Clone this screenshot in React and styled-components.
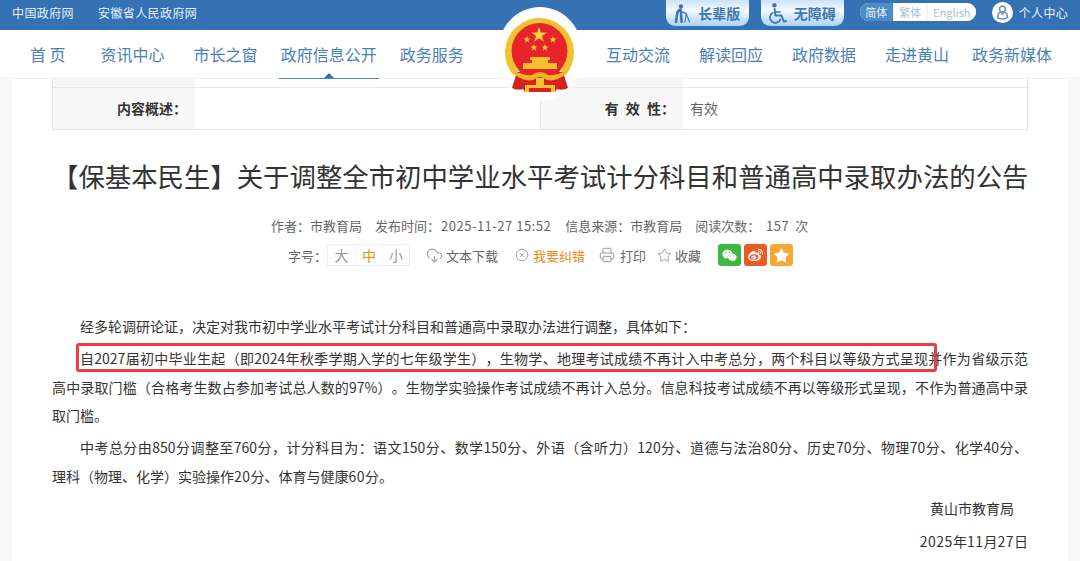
import React from 'react';
import styled, { createGlobalStyle } from 'styled-components';
import { FaWeibo, FaWeixin, FaStar } from 'react-icons/fa';
import { CircleX, CloudDownload, Printer, Star } from 'lucide-react';

const GlobalStyle = createGlobalStyle`
  html, body { margin: 0; padding: 0; background: #fff; overflow: hidden; }
  body {
    font-family: "Noto Sans CJK SC", "Liberation Sans", sans-serif;
    text-spacing-trim: space-all;
  }
  * { box-sizing: border-box; }
`;

const Page = styled.div`
  position: relative;
  width: 1080px;
  height: 561px;
  overflow: hidden;
  background: #f9f9f9;
`;

const TopBar = styled.div`
  height: 30px;
  background: #3572b4;
  display: flex;
  align-items: flex-start;
  padding-left: 12px;
  color: #e4eef8;
  font-size: 12px;
`;

const TopLink = styled.span`
  line-height: 26px;
  letter-spacing: 0.4px;
  margin-right: 24px;
`;

const TopRight = styled.div`
  margin-left: auto;
  display: flex;
  align-items: flex-start;
  padding-right: 12px;
`;

const ModeButton = styled.div`
  width: 83px;
  height: 26px;
  margin-right: 12px;
  display: flex;
  align-items: center;
  justify-content: center;
  gap: 7px;
  border-radius: 0 0 9px 9px;
  background: linear-gradient(#c9e3f9, #f3faff 40%, #a9d3f7);
  color: #3f77b2;
  font-size: 14px;
  font-weight: 700;
  svg { flex: none; }
`;

const LangPill = styled.div`
  display: flex;
  height: 18px;
  margin: 3px 16px 0 4px;
  border-radius: 9px;
  overflow: hidden;
  background: #fff;
  font-size: 11px;
`;

const Lang = styled.span`
  width: ${(p) => p.$w}px;
  line-height: 18px;
  text-align: center;
  color: ${(p) => (p.$on ? '#eaf3fb' : '#a9bfd6')};
  background: ${(p) => (p.$on ? '#4d8cc6' : '#fff')};
  & + & { border-left: 1px solid #e6edf4; }
`;

const UserBadge = styled.div`
  display: flex;
  align-items: center;
  gap: 6px;
  height: 24px;
  font-size: 12px;
  letter-spacing: 0.3px;
  color: #eef4fa;
`;

const NavBar = styled.div`
  height: 49px;
  background: #fff;
  display: flex;
  align-items: flex-start;
  padding: 0 28px 0 30px;
  justify-content: space-between;
  border-bottom: 1px solid #f0f0f0;
`;

const NavGroup = styled.nav`
  display: flex;
`;

const NavLink = styled.a`
  position: relative;
  height: 48px;
  margin-left: ${(p) => p.$gap || 0}px;
  font-size: 16px;
  line-height: 48px;
  color: #4a7fb7;
  white-space: pre;
  ${(p) =>
    p.$active &&
    `
    &::after {
      content: '';
      position: absolute;
      left: -2px;
      right: -2px;
      bottom: -1px;
      border-bottom: 1px solid #4f86bd;
    }
    &::before {
      content: '';
      position: absolute;
      left: 50%;
      bottom: -1px;
      margin-left: -6px;
      border: 6px solid transparent;
      border-top: 0;
      border-bottom-color: #3572b4;
    }
  `}
`;

const EmblemWrap = styled.div`
  position: absolute;
  z-index: 2;
  left: 497px;
  top: 7px;
  width: 86px;
  height: 94px;
  border-radius: 50%;
  background: #fff;
  padding: 11px 0 0 8px;
`;

const Content = styled.main`
  margin: 0 12px;
  height: 482px;
  padding: 0 40px;
  background: #fff;
`;

const InfoTable = styled.div`
  position: relative;
  display: grid;
  grid-template-columns: 143px 345px 143px 345px;
  height: 51px;
  border-bottom: 1px solid #e4e4e4;
  border-right: 1px solid #e4e4e4;
  &::before {
    content: '';
    position: absolute;
    left: 0;
    right: 0;
    top: 8px;
    border-top: 1px solid #e8e8e8;
  }
`;

const InfoLabel = styled.div`
  background: #f7f7f7;
  border-left: 1px solid #e8e8e8;
  padding: 8px 8px 0 0;
  display: flex;
  align-items: center;
  justify-content: flex-end;
  font-size: 14px;
  font-weight: 700;
  color: #333;
  white-space: pre;
  word-spacing: ${(p) => p.$wordGap || 0}px;
`;

const InfoValue = styled.div`
  padding: 8px 0 0 7px;
  display: flex;
  align-items: center;
  font-size: 14px;
  color: #666;
`;

const Title = styled.h1`
  margin: 26px 0 0;
  font-size: 26.4px;
  font-weight: 400;
  line-height: 40px;
  color: #333;
  text-align: center;
  white-space: nowrap;
`;

const Meta = styled.div`
  margin-top: 20px;
  display: flex;
  padding-left: 219px;
  font-size: 13px;
  line-height: 20px;
  color: #666;
  white-space: pre;
`;

const MetaItem = styled.span`
  margin-right: 13px;
`;

const Digits = styled.span`
  letter-spacing: 0.5px;
  margin: 0 ${(p) => p.$side || 0}px;
`;

const Tools = styled.div`
  margin-top: 8px;
  height: 22px;
  padding-left: 236px;
  display: flex;
  align-items: center;
  font-size: 13px;
  color: #666;
`;

const SizeBox = styled.div`
  display: flex;
  margin: 0 16px 0 0;
  height: 22px;
  border: 1px solid #f0f0f0;
  font-size: 14px;
`;

const SizeCell = styled.span`
  width: 27px;
  line-height: 20px;
  text-align: center;
  color: ${(p) => (p.$on ? '#f08a1d' : '#999')};
  & + & { border-left: 1px solid #f5f5f5; }
`;

const Tool = styled.span`
  display: inline-flex;
  align-items: center;
  gap: ${(p) => p.$gap || 4}px;
  margin-right: ${(p) => p.$mr || 0}px;
  color: ${(p) => p.$color || '#666'};
  svg { color: #9a9a9a; flex: none; }
`;

const Share = styled.span`
  width: 23px;
  height: 22px;
  margin-right: 3px;
  border-radius: 3px;
  background: ${(p) => p.$bg};
  color: #fff;
  display: inline-flex;
  align-items: center;
  justify-content: center;
  font-size: 15px;
`;

const Article = styled.article`
  margin-top: 46px;
  font-size: 14px;
  line-height: 28.5px;
  color: #333;
`;

const Para = styled.p`
  position: relative;
  margin: 0 0 3.5px;
`;

const Line = styled.span`
  display: block;
  padding-left: ${(p) => (p.$indent ? 28 : 0)}px;
  text-align: justify;
  text-align-last: ${(p) => (p.$full ? 'justify' : 'left')};
`;

const Mark = styled.span`
  position: absolute;
  left: 24px;
  top: -1px;
  width: 861px;
  height: 29px;
  border: 3px solid #ee3b48;
  border-radius: 3px;
`;

const Sign = styled.p`
  margin: ${(p) => p.$mt || 3.5}px 0 0;
  text-align: right;
  padding-right: ${(p) => p.$pr || 0}px;
`;

const ElderIcon = () => (
  <svg width="17" height="19" viewBox="0 0 17 19" fill="none" stroke="#3f77b2" strokeLinecap="round">
    <circle cx="7" cy="2.4" r="2.2" fill="#3f77b2" stroke="none" />
    <path d="M6.4 5.4 Q3 7 3 10.6 L2 18 M6.4 5.4 Q7.4 9 7 11 L7.6 18" strokeWidth="2.6" />
    <path d="M7 7.6 L12 9.4" strokeWidth="1.4" />
    <path d="M12.2 9.4 L11 18 M12.2 9.4 L15.4 18" strokeWidth="1.1" />
  </svg>
);

const WheelchairIcon = () => (
  <svg width="18" height="21" viewBox="0 0 18 21" fill="none" stroke="#3f77b2" strokeLinecap="round">
    <circle cx="5.4" cy="2.2" r="2.2" fill="#3f77b2" stroke="none" />
    <path d="M5.6 6 L6.4 12.6 L12.4 12.6 L15 18.6 L17 18" strokeWidth="2" />
    <path d="M6 9 L11 9" strokeWidth="1.6" />
    <path d="M3.6 9.8 A5.4 5.4 0 1 0 11.4 16.4" strokeWidth="1.7" />
  </svg>
);

const STAR_SMALL = 'l.9 2.5 2.7 0 -2.2 1.6 .8 2.6 -2.2 -1.6 -2.2 1.6 .8 -2.6 -2.2 -1.6 2.7 0 Z';

const Emblem = () => (
  <svg width="70" height="76" viewBox="0 0 70 76">
    <defs>
      <clipPath id="discCut">
        <rect x="0" y="0" width="70" height="56" />
      </clipPath>
    </defs>
    {/* red drape behind the ribbon */}
    <path d="M12 54 L58 54 L63 70 Q58 73 52 71 L50 74 L20 74 L18 71 Q12 73 7 70 Z" fill="#d8201f" />
    <circle cx="34.5" cy="33" r="28.5" fill="#e8232a" clipPath="url(#discCut)" />
    <path d="M8.3 57 A34.5 34.5 0 1 1 60.7 57 L55.1 52 A28 28 0 1 0 13.9 52 Z" fill="#f3c22e" />
    <path d="M34 9 l1.9 5.6 5.9 0 -4.8 3.5 1.8 5.7 -4.8 -3.5 -4.8 3.5 1.8 -5.7 -4.8 -3.5 5.9 0 Z" fill="#f9d33a" />
    <path d={`M22 18 ${STAR_SMALL}`} fill="#f9d33a" />
    <path d={`M48 18 ${STAR_SMALL}`} fill="#f9d33a" />
    <path d={`M29 26 ${STAR_SMALL}`} fill="#f9d33a" />
    <path d={`M40 26 ${STAR_SMALL}`} fill="#f9d33a" />
    {/* gate */}
    <path d="M25 39 h20 v3 h-2 v3 h9 v6 h-34 v-6 h9 v-3 h-2 Z" fill="#f3c22e" />
    {/* ribbon */}
    <path d="M9 53 Q20 58 27 57 Q31 54 35 54 Q39 54 43 57 Q50 58 61 53 L60 57 Q50 64 42 62 Q38 59 35 59 Q32 59 28 62 Q20 64 10 57 Z" fill="#f0b424" />
    <path d="M20 67 h30 v7 h-4 v-4 h-22 v4 h-4 Z" fill="#f3c22e" />
    <path d="M31 60 h8 v7 h-8 Z" fill="#f3c22e" />
  </svg>
);

const UserIcon = () => (
  <svg width="21" height="21" viewBox="0 0 21 21">
    <circle cx="10.5" cy="10.5" r="10.5" fill="#fff" />
    <circle cx="10.5" cy="7" r="3" fill="none" stroke="#6c96c6" strokeWidth="1.6" />
    <path d="M6 16 q-1 -5 3 -6 l1.5 2.2 1.5 -2.2 q4 1 3 6 q-4.5 2 -9 0 Z" fill="none" stroke="#6c96c6" strokeWidth="1.6" />
  </svg>
);

const LEFT_NAV = [
  ['首 页', 0],
  ['资讯中心', 35],
  ['市长之窗', 29],
  ['政府信息公开', 23, true],
  ['政务服务', 23],
];
const RIGHT_NAV = [
  ['互动交流', 0],
  ['解读回应', 29],
  ['政府数据', 29],
  ['走进黄山', 29],
  ['政务新媒体', 23],
];

const renderNav = (items) =>
  items.map(([label, gap, active]) => (
    <NavLink key={label} $gap={gap} $active={active}>
      {label}
    </NavLink>
  ));

export default function App() {
  return (
    <Page>
      <GlobalStyle />
      <TopBar>
        <TopLink>中国政府网</TopLink>
        <TopLink>安徽省人民政府网</TopLink>
        <TopRight>
          <ModeButton>
            <ElderIcon />
            长辈版
          </ModeButton>
          <ModeButton>
            <WheelchairIcon />
            无障碍
          </ModeButton>
          <LangPill>
            <Lang $w={33} $on>简体</Lang>
            <Lang $w={34}>繁体</Lang>
            <Lang $w={49}>English</Lang>
          </LangPill>
          <UserBadge>
            <UserIcon />
            个人中心
          </UserBadge>
        </TopRight>
      </TopBar>
      <NavBar>
        <NavGroup>{renderNav(LEFT_NAV)}</NavGroup>
        <NavGroup>{renderNav(RIGHT_NAV)}</NavGroup>
      </NavBar>
      <EmblemWrap>
        <Emblem />
      </EmblemWrap>
      <Content>
        <InfoTable>
          <InfoLabel>内容概述：</InfoLabel>
          <InfoValue />
          <InfoLabel $wordGap={4}>有 效 性：</InfoLabel>
          <InfoValue>有效</InfoValue>
        </InfoTable>
        <Title>【保基本民生】关于调整全市初中学业水平考试计分科目和普通高中录取办法的公告</Title>
        <Meta>
          <MetaItem>作者：市教育局</MetaItem>
          <MetaItem>发布时间：<Digits $side={1}>2025-11-27 15:52</Digits></MetaItem>
          <MetaItem>信息来源：市教育局</MetaItem>
          <MetaItem>阅读次数： <Digits $side={3}>157</Digits> 次</MetaItem>
        </Meta>
        <Tools>
          <Tool>字号：</Tool>
          <SizeBox>
            <SizeCell>大</SizeCell>
            <SizeCell $on>中</SizeCell>
            <SizeCell>小</SizeCell>
          </SizeBox>
          <Tool $mr={17} $gap={3}>
            <CloudDownload size={17} strokeWidth={1.5} />
            文本下载
          </Tool>
          <Tool $mr={14} $gap={4} $color="#f08a1d">
            <CircleX size={14} strokeWidth={1.5} />
            我要纠错
          </Tool>
          <Tool $mr={11} $gap={5}>
            <Printer size={16} strokeWidth={1.5} />
            打印
          </Tool>
          <Tool $mr={17} $gap={3}>
            <Star size={15} strokeWidth={1.5} />
            收藏
          </Tool>
          <Share $bg="#3fb83f"><FaWeixin /></Share>
          <Share $bg="#ee5a24"><FaWeibo /></Share>
          <Share $bg="#f7a833"><FaStar /></Share>
        </Tools>
        <Article>
          <Para>
            <Line $indent>经多轮调研论证，决定对我市初中学业水平考试计分科目和普通高中录取办法进行调整，具体如下：</Line>
          </Para>
          <Para>
            <Mark />
            <Line $indent $full>自2027届初中毕业生起（即2024年秋季学期入学的七年级学生），生物学、地理考试成绩不再计入中考总分，两个科目以等级方式呈现并作为省级示范</Line>
            <Line $full>高中录取门槛（合格考生数占参加考试总人数的97%）。生物学实验操作考试成绩不再计入总分。信息科技考试成绩不再以等级形式呈现，不作为普通高中录</Line>
            <Line>取门槛。</Line>
          </Para>
          <Para>
            <Line $indent $full>中考总分由850分调整至760分，计分科目为：语文150分、数学150分、外语（含听力）120分、道德与法治80分、历史70分、物理70分、化学40分、</Line>
            <Line>理科（物理、化学）实验操作<Digits>20</Digits>分、体育与健康<Digits>60</Digits>分。</Line>
          </Para>
          <Sign $pr={14}>黄山市教育局</Sign>
          <Sign $mt={4.5}><Digits>2025</Digits>年<Digits>11</Digits>月<Digits>27</Digits>日</Sign>
        </Article>
      </Content>
    </Page>
  );
}
